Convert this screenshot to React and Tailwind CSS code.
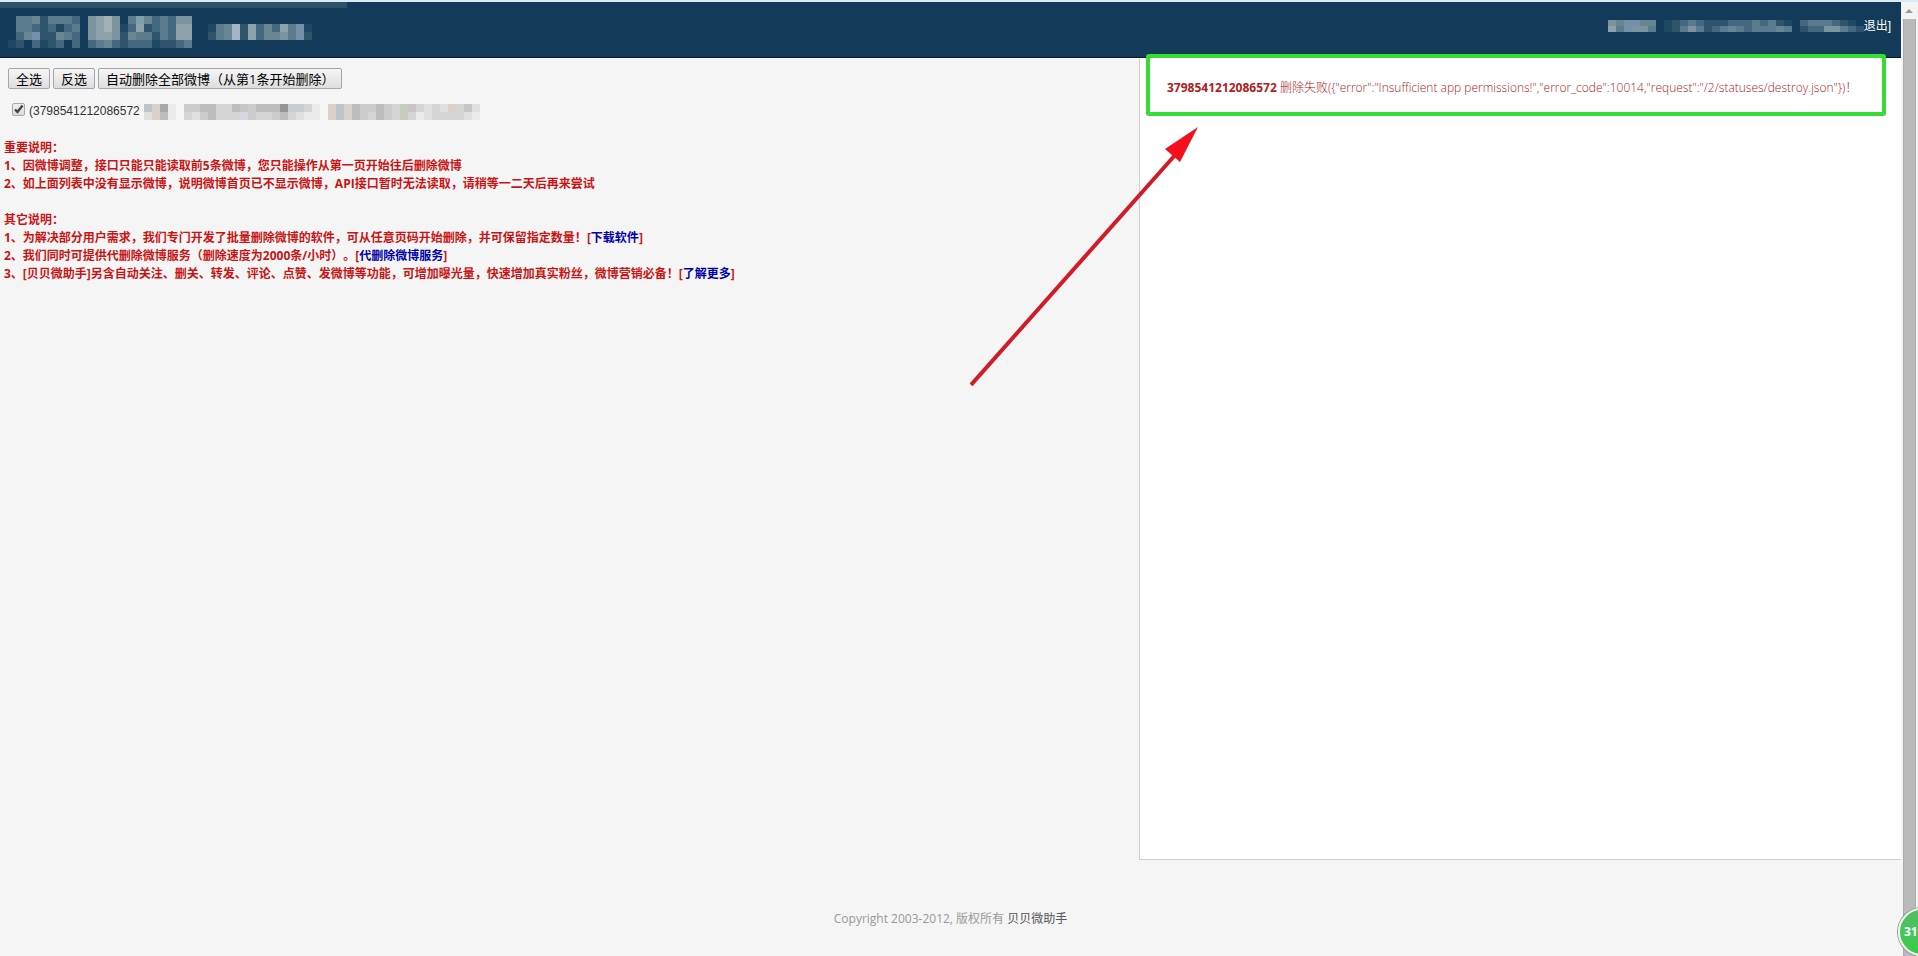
import React, { useState } from 'react';

// one character per mosaic cell, '.' leaves the cell empty
const DARK = {
	a: '#1f4862',
	b: '#2e536b',
	c: '#446880',
	d: '#5a7a8e',
	e: '#688592',
	f: '#7b94a0',
	g: '#8da2ab',
	h: '#a0b1b8',
	i: '#7b9fab',
	j: '#a2b6c8',
	k: '#7690ac'
};

const LIGHT = {
	a: '#ebebeb',
	b: '#e0e0e0',
	c: '#d6d6d6',
	d: '#cccccc',
	e: '#bcbcbc',
	f: '#a5a9a7',
	g: '#959599',
	h: '#bcc6cb',
	i: '#d9d0cc',
	j: '#c5cbbf',
	k: '#cac4c8',
	l: '#d8d6de',
	m: '#c8cdcf'
};

const LOGO = ['.ddebdddc.fghf.diecdcff', '.ddcbcacd.fghfacgbcdcgg', '.cekbbedc.fggfbeddbdcgg', 'ab.cabc.c.cdecbcccabbcd'];
const SUBTITLE = ['adejbgcecgdka', 'bdejbgceefdkb'];
const ACCOUNT = ['fekkee.abcdcbbbcccdcdba.cdddcba.', 'gdkffd.abdfdbcdedcddded.bccffdcb'];

function Mosaic({ rows, palette, cell = 8, rowHeight = cell }) {
	return (
		<svg
			width={rows[0].length * cell}
			height={rows.length * rowHeight}
			shapeRendering="crispEdges"
			aria-hidden="true"
			className="shrink-0">
			{rows.map((row, y) =>
				row
					.split('')
					.map((key, x) =>
						palette[key] ? (
							<rect
								key={`${x}-${y}`}
								x={x * cell}
								y={y * rowHeight}
								width={cell}
								height={rowHeight}
								fill={palette[key]}
							/>
						) : null
					)
			)}
		</svg>
	);
}

function ToolButton({ children, onClick }) {
	return (
		<button
			type="button"
			onClick={onClick}
			className="h-[21px] px-[7px] border border-[#a6a6a6] rounded-[2px] bg-linear-to-b from-[#f6f6f6] to-[#dedede] text-[13px] leading-[18px] text-black whitespace-nowrap">
			{children}
		</button>
	);
}

function NoteLink({ children }) {
	return (
		<>
			[
			<a href="#" className="text-[#0000aa]">
				{children}
			</a>
			]
		</>
	);
}

function Header() {
	return (
		<header className="h-14 bg-[#133a58] border-b border-[#0b1a28]">
			<div className="h-[6px] w-[347px] bg-[#2c5268]" />
			<div className="flex items-start justify-between pl-2 pr-[10px]">
				<div className="flex items-center gap-4 pt-2">
					<Mosaic palette={DARK} rows={LOGO} />
					<Mosaic palette={DARK} rows={SUBTITLE} />
				</div>
				<div className="flex items-center pt-[9px] font-['Liberation_Sans','Noto_Sans_CJK_SC',sans-serif] text-xs leading-[18px] text-white">
					<Mosaic palette={DARK} rows={ACCOUNT} rowHeight={6} />
					<a href="#">退出</a>]
				</div>
			</div>
		</header>
	);
}

function Notes() {
	return (
		<div className="mt-[19px] px-1 text-xs leading-[18px] font-bold text-[#c81414]">
			<p>重要说明：</p>
			<p>1、因微博调整，接口只能只能读取前5条微博，您只能操作从第一页开始往后删除微博</p>
			<p>2、如上面列表中没有显示微博，说明微博首页已不显示微博，API接口暂时无法读取，请稍等一二天后再来尝试</p>
			<p className="mt-[18px]">其它说明：</p>
			<p>
				1、为解决部分用户需求，我们专门开发了批量删除微博的软件，可从任意页码开始删除，并可保留指定数量！
				<NoteLink>下载软件</NoteLink>
			</p>
			<p>
				2、我们同时可提供代删除微博服务（删除速度为2000条/小时）。
				<NoteLink>代删除微博服务</NoteLink>
			</p>
			<p>
				3、[贝贝微助手]另含自动关注、删关、转发、评论、点赞、发微博等功能，可增加曝光量，快速增加真实粉丝，微博营销必备！
				<NoteLink>了解更多</NoteLink>
			</p>
		</div>
	);
}

function ResultPanel() {
	return (
		<aside className="relative w-[762px] h-[802px] shrink-0 bg-white border-l border-b border-[#d0d0d0]">
			<p className="pt-[21px] pl-[27px] text-xs leading-[18px] font-light text-[#b02020] whitespace-nowrap">
				<b className="font-bold">3798541212086572</b> 删除失败({'{"error":"Insufficient app permissions!","error_code":10014,"request":"/2/statuses/destroy.json"}'})！
			</p>
			<div className="absolute -top-1 left-[6px] right-[15px] h-[62px] border-4 border-[#35dd35] rounded-[3px]" />
			<svg width="230" height="262" viewBox="0 0 230 262" className="absolute top-[67px] -left-[170px]" aria-hidden="true">
				<path d="M1 260 L206 29" stroke="#d01c28" strokeWidth="4" />
				<path d="M228 2 L195 24 L210 37 Z" fill="#f5101c" />
			</svg>
		</aside>
	);
}

function Scrollbar() {
	return (
		<div className="flex flex-col items-center w-[17px] shrink-0 bg-[#f4f4f4]" aria-hidden="true">
			<svg width="17" height="17" viewBox="0 0 17 17">
				<path d="M4 11 L8 7 L12 11 Z" fill="#9a9a9a" />
			</svg>
			<div className="w-[13px] flex-1 bg-[#bababa] border-x border-[#acacac]" />
		</div>
	);
}

export default function App() {
	const [checked, setChecked] = useState(true);

	return (
		<div className="relative flex flex-col min-h-screen overflow-hidden bg-[#f5f5f5] font-['Open_Sans','Noto_Sans_CJK_SC',sans-serif] [text-spacing-trim:space-all]">
			<div className="h-[2px] bg-[#dceaf4]" />
			<div className="flex flex-1">
				<div className="flex-1 min-w-0">
					<Header />
					<main className="flex items-start">
						<section className="flex-1 min-w-0">
							<div className="flex gap-[3px] pt-[10px] pl-2">
								<ToolButton onClick={() => setChecked(true)}>全选</ToolButton>
								<ToolButton onClick={() => setChecked(!checked)}>反选</ToolButton>
								<ToolButton>自动删除全部微博（从第1条开始删除）</ToolButton>
							</div>
							<div className="flex items-center h-[18px] mt-[13px] pl-3 font-['Liberation_Sans','Noto_Sans_CJK_SC',sans-serif] text-xs text-[#333]">
								<input
									id="post"
									type="checkbox"
									checked={checked}
									onChange={e => setChecked(e.target.checked)}
									className="peer appearance-none size-[13px] mb-1 border border-[#a8a8a8] rounded-[2px] bg-linear-to-b from-[#f0f0f0] to-[#dcdcdc]"
								/>
								<svg
									width="13"
									height="13"
									viewBox="0 0 13 13"
									className="-ml-[13px] mb-1 pointer-events-none invisible peer-checked:visible"
									aria-hidden="true">
									<path d="M3 6.5 L5.5 9 L10.5 2.5" fill="none" stroke="#444" strokeWidth="2.4" />
								</svg>
								<label htmlFor="post" className="flex items-center gap-1 pl-1">
									<span>(3798541212086572</span>
									<span className="flex gap-2 pt-[2px]">
										<Mosaic palette={LIGHT} rows={['hifa', 'biea']} />
										<Mosaic palette={LIGHT} rows={['ddeeccekdeeegmmca', 'cbdecccldccdecbaa']} />
										<Mosaic palette={LIGHT} rows={['ihieddedcjkcbcbickb', 'ihiedcedcjcabccccba']} />
									</span>
								</label>
							</div>
							<Notes />
						</section>
						<ResultPanel />
					</main>
					<footer className="pt-[50px] pb-7 text-center text-xs leading-[18px] text-[#999]">
						Copyright 2003-2012, 版权所有{' '}
						<a href="#" className="text-[#555]">
							贝贝微助手
						</a>
					</footer>
				</div>
				<Scrollbar />
			</div>
			<div className="absolute bottom-0 -right-[28px] flex items-center size-[48px] pl-1 rounded-full border-2 border-[#e8f4ea] bg-linear-to-b from-[#52bd68] to-[#35cc48] ring-1 ring-[#8b9c8f] text-xs font-bold text-white">
				31
			</div>
		</div>
	);
}
